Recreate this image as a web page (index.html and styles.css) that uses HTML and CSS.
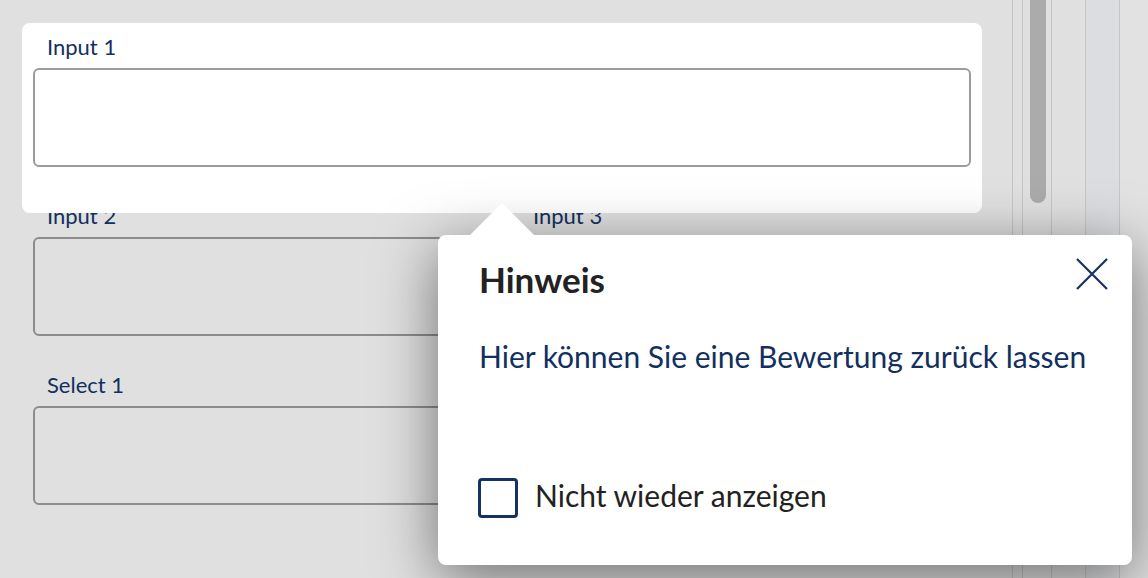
FILE: index.html
```html
<!DOCTYPE html>
<html lang="de">
<head>
<meta charset="utf-8">
<title>Hinweis</title>
<link rel="stylesheet" href="styles.css">
</head>
<body>
<div class="page">
  <main class="content">
    <div class="spotlight"></div>
    <form class="form">
      <div class="field field-focus">
        <label class="label">Input 1</label>
        <div class="box box-light"></div>
      </div>
      <div class="row">
        <div class="field">
          <label class="label">Input 2</label>
          <div class="box"></div>
        </div>
        <div class="field">
          <label class="label">Input 3</label>
          <div class="box"></div>
        </div>
      </div>
      <div class="row">
        <div class="field">
          <label class="label">Select 1</label>
          <div class="box"></div>
        </div>
        <div class="field"></div>
      </div>
    </form>
  </main>
  <aside class="rail">
    <div class="col col-a"></div>
    <div class="col col-b"><div class="thumb"></div></div>
    <div class="col col-c"></div>
    <div class="col col-d"></div>
    <div class="col col-e"></div>
  </aside>

  <div class="popover" role="dialog">
    <div class="arrow"></div>
    <div class="pop-head">
      <h2 class="pop-title">Hinweis</h2>
      <button class="close" type="button" aria-label="Schließen">
        <svg width="32" height="32" viewBox="0 0 32 32"><path d="M1 1 L31 31 M31 1 L1 31" stroke="#16325f" stroke-width="2.2" fill="none"/></svg>
      </button>
    </div>
    <p class="pop-text">Hier können Sie eine Bewertung zurück lassen</p>
    <label class="check">
      <span class="check-box"></span>
      <span class="check-label">Nicht wieder anzeigen</span>
    </label>
  </div>
</div>
</body>
</html>
```
FILE: styles.css
```css
* { box-sizing: border-box; }
html, body { margin: 0; padding: 0; }
body {
  background: #e0e0e0;
  font-family: "Lato", "Liberation Sans", sans-serif;
  overflow: hidden;
  width: 1148px;
  height: 578px;
}
.page {
  position: relative;
  display: flex;
  width: 1148px;
  height: 578px;
}
.content {
  position: relative;
  width: 1012px;
  flex: none;
}
.spotlight {
  position: absolute;
  left: 22px;
  top: 23px;
  width: 960px;
  height: 190px;
  background: #ffffff;
  border-radius: 8px;
  z-index: 1;
}
.form {
  padding: 35px 0 0 33px;
  width: 971px;
  display: flex;
  flex-direction: column;
  gap: 37px;
}
.row {
  display: grid;
  grid-template-columns: 1fr 1fr;
  column-gap: 34px;
}
.field {
  display: flex;
  flex-direction: column;
  gap: 9px;
}
.field-focus {
  position: relative;
  z-index: 2;
}
.label {
  display: block;
  padding-left: 14px;
  font-size: 22px;
  line-height: 24px;
  color: #12305f;
}
.box {
  height: 99px;
  border: 2px solid #8c8c8c;
  border-radius: 6px;
  background: #e0e0e0;
}
.box-light {
  border-color: #9c9c9c;
  background: #ffffff;
}
.rail {
  flex: 1;
  display: flex;
  height: 100%;
}
.col { height: 100%; }
.col-a { width: 10px; border-left: 1px solid #c6c6c6; }
.col-b { width: 29px; border-left: 1px solid #c6c6c6; padding-left: 7px; }
.col-c { width: 34px; border-left: 1px solid #c6c6c6; }
.col-d { width: 34px; border-left: 1px solid #c6c6c6; background: #dcdde0; }
.col-e { flex: 1; border-left: 1px solid #c6c6c6; background: #e2e2e2; }
.thumb {
  width: 16px;
  height: 213px;
  margin-top: -10px;
  background: #ababab;
  border-radius: 8px;
}
.popover {
  position: absolute;
  left: 438px;
  top: 235px;
  width: 694px;
  height: 330px;
  background: #ffffff;
  border-radius: 8px;
  box-shadow: 0 14px 60px rgba(0, 0, 0, 0.5);
  padding: 22px 24px 0 41px;
  z-index: 5;
}
.arrow {
  position: absolute;
  left: 32px;
  top: -32px;
  width: 0;
  height: 0;
  border-left: 32px solid transparent;
  border-right: 32px solid transparent;
  border-bottom: 32px solid #ffffff;
}
.pop-head {
  display: flex;
  justify-content: space-between;
  align-items: flex-start;
}
.pop-title {
  margin: 0;
  font-size: 35px;
  line-height: 44px;
  font-weight: 700;
  color: #222222;
}
.close {
  margin: 0;
  padding: 0;
  border: 0;
  background: none;
  width: 32px;
  height: 32px;
  margin-top: 1px;
}
.close svg { display: block; }
.pop-text {
  margin: 37px 0 0 0;
  font-size: 30px;
  line-height: 36px;
  color: #12305f;
}
.check {
  display: flex;
  align-items: center;
  gap: 17px;
  margin-top: 103px;
  margin-left: -1px;
}
.check-box {
  width: 40px;
  height: 40px;
  border: 3px solid #16325f;
  border-radius: 4px;
  flex: none;
}
.check-label {
  font-size: 30px;
  line-height: 36px;
  color: #222222;
  margin-bottom: 5px;
}
```
